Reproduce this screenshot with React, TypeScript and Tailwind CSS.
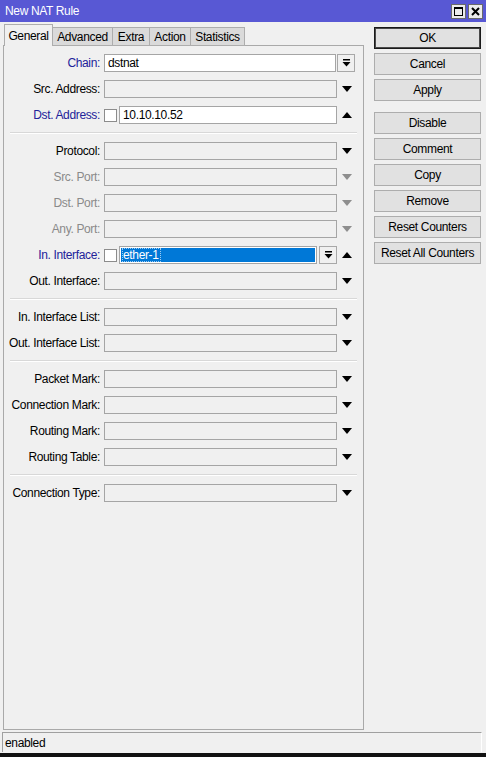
import React from "react";

type Kind = "plain" | "combo" | "check" | "checkSel";
type Row = { label: string; tone: "blue" | "black" | "gray"; kind: Kind; arrow?: "down" | "up" | "downGray" | "none"; value?: string };

const sections: Row[][] = [
  [
    { label: "Chain:", tone: "blue", kind: "combo", arrow: "none", value: "dstnat" },
    { label: "Src. Address:", tone: "black", kind: "plain", arrow: "down" },
    { label: "Dst. Address:", tone: "blue", kind: "check", arrow: "up", value: "10.10.10.52" },
  ],
  [
    { label: "Protocol:", tone: "black", kind: "plain", arrow: "down" },
    { label: "Src. Port:", tone: "gray", kind: "plain", arrow: "downGray" },
    { label: "Dst. Port:", tone: "gray", kind: "plain", arrow: "downGray" },
    { label: "Any. Port:", tone: "gray", kind: "plain", arrow: "downGray" },
    { label: "In. Interface:", tone: "blue", kind: "checkSel", arrow: "up", value: "ether-1" },
    { label: "Out. Interface:", tone: "black", kind: "plain", arrow: "down" },
  ],
  [
    { label: "In. Interface List:", tone: "black", kind: "plain", arrow: "down" },
    { label: "Out. Interface List:", tone: "black", kind: "plain", arrow: "down" },
  ],
  [
    { label: "Packet Mark:", tone: "black", kind: "plain", arrow: "down" },
    { label: "Connection Mark:", tone: "black", kind: "plain", arrow: "down" },
    { label: "Routing Mark:", tone: "black", kind: "plain", arrow: "down" },
    { label: "Routing Table:", tone: "black", kind: "plain", arrow: "down" },
  ],
  [{ label: "Connection Type:", tone: "black", kind: "plain", arrow: "down" }],
];

const DropAllIcon = () => (
  <svg width="9" height="8" viewBox="0 0 9 8">
    <rect x="1" y="0" width="7" height="1.5" fill="#000" />
    <path d="M0.5 3 L8.5 3 L4.5 7.5 Z" fill="#000" />
  </svg>
);

const Arrow = ({ dir, color }: { dir: "down" | "up"; color: string }) => (
  <svg width="10" height="6" viewBox="0 0 10 6">
    {dir === "down" ? <path d="M0 0 L10 0 L5 6 Z" fill={color} /> : <path d="M0 6 L10 6 L5 0 Z" fill={color} />}
  </svg>
);

const DropButton = () => (
  <div className="w-[18px] h-[18px] border border-[#a8a8a8] bg-[#f0f0f0] flex items-center justify-center shrink-0">
    <DropAllIcon />
  </div>
);

const Checkbox = () => <div className="w-[13px] h-[13px] border border-[#8c8c8c] bg-white shrink-0" />;

function Field({ row }: { row: Row }) {
  const toneCls = row.tone === "blue" ? "text-[#22229a]" : row.tone === "gray" ? "text-[#8a8a8a]" : "text-black";
  return (
    <div className="flex items-center h-[18px]">
      <div className={`w-[96px] text-right whitespace-nowrap ${toneCls}`}>{row.label}</div>
      <div className="w-[4px] shrink-0" />
      {row.kind === "plain" && <div className="w-[233px] h-[18px] border border-[#a5a5a5] bg-[#f0f0f0] shrink-0" />}
      {row.kind === "combo" && (
        <>
          <div className="w-[232px] h-[18px] border border-[#a5a5a5] bg-white shrink-0 flex items-center px-[3px] text-black">{row.value}</div>
          <div className="w-[1px] shrink-0" />
          <DropButton />
        </>
      )}
      {row.kind === "check" && (
        <>
          <Checkbox />
          <div className="w-[2px] shrink-0" />
          <div className="w-[218px] h-[18px] border border-[#a5a5a5] bg-white shrink-0 flex items-center px-[3px] text-black">{row.value}</div>
        </>
      )}
      {row.kind === "checkSel" && (
        <>
          <Checkbox />
          <div className="w-[2px] shrink-0" />
          <div className="w-[198px] h-[18px] border border-[#a5a5a5] bg-white shrink-0 p-[1px]">
            <div className="w-full h-full bg-[#0078d7] flex items-center pl-[1px] text-white">
              <span className="border border-dotted border-[#9ecbf0] leading-[12px] pr-[1px]">{row.value}</span>
            </div>
          </div>
          <div className="w-[2px] shrink-0" />
          <DropButton />
        </>
      )}
      {row.arrow && row.arrow !== "none" && (
        <div className="w-[19px] flex items-center justify-center shrink-0">
          {row.arrow === "up" ? <Arrow dir="up" color="#000" /> : <Arrow dir="down" color={row.arrow === "downGray" ? "#8e8e8e" : "#000"} />}
        </div>
      )}
    </div>
  );
}

const Btn = ({ label, def, className = "" }: { label: string; def?: boolean; className?: string }) => (
  <div
    className={`h-[22px] flex items-center justify-center bg-[#e1e1e1] text-black ${
      def ? "border border-[#1a1a1a] shadow-[inset_0_0_0_1px_#4a4a4a]" : "border border-[#adadad]"
    } ${className}`}
  >
    {label}
  </div>
);

export default function App() {
  const tabs = ["General", "Advanced", "Extra", "Action", "Statistics"];
  const tabW = [49, 60, 37, 41, 54];
  return (
    <div
      className="w-[486px] h-[757px] bg-[#f0f0f0] flex flex-col overflow-hidden text-[12px] tracking-[-0.35px]"
      style={{ fontFamily: '"Liberation Sans", Arial, sans-serif' }}
    >
      {/* Title bar */}
      <div className="h-[22px] bg-[#5858d4] flex items-center justify-between pl-[5px] pr-[3px] shrink-0">
        <span className="text-white text-[12px]">New NAT Rule</span>
        <div className="flex gap-[2px]">
          <div className="w-[15px] h-[15px] bg-[#ececec] border border-[#6a6a6a] flex items-center justify-center">
            <div className="w-[9px] h-[9px] border border-black border-t-2" />
          </div>
          <div className="w-[15px] h-[15px] bg-[#ececec] border border-[#6a6a6a] flex items-center justify-center">
            <svg width="9" height="9" viewBox="0 0 9 9">
              <path d="M1 1 L8 8 M8 1 L1 8" stroke="#000" strokeWidth="2" />
            </svg>
          </div>
        </div>
      </div>

      <div className="flex flex-1 min-h-0">
        {/* Left: tabs + frame */}
        <div className="ml-[3px] w-[361px] flex flex-col pt-[2px]">
          <div className="flex items-end h-[22px] pl-[1px] relative z-10 -mb-px">
            {tabs.map((t, i) =>
              i === 0 ? (
                <div
                  key={t}
                  className="h-[22px] bg-[#f0f0f0] border border-b-0 border-[#adadad] flex items-center justify-center text-black"
                  style={{ width: tabW[i] }}
                >
                  {t}
                </div>
              ) : (
                <div
                  key={t}
                  className="h-[19px] bg-[#dadada] border border-l-0 border-[#adadad] flex items-center justify-center text-black"
                  style={{ width: tabW[i] }}
                >
                  {t}
                </div>
              )
            )}
          </div>
          <div className="flex-1 border border-[#a9a9a9] bg-[#f0f0f0] pt-[8px]">
            <div className="flex flex-col">
              {sections.map((sec, si) => (
                <React.Fragment key={si}>
                  {si > 0 && (
                    <div className="my-[8px] ml-[6px] mr-[6px] h-[2px] border-t border-[#d8d8d8] border-b border-b-white" />
                  )}
                  <div className="flex flex-col gap-[8px]">
                    {sec.map((r) => (
                      <Field key={r.label} row={r} />
                    ))}
                  </div>
                </React.Fragment>
              ))}
            </div>
          </div>
        </div>

        {/* Right: buttons */}
        <div className="ml-[10px] w-[107px] flex flex-col gap-[4px] pt-[5px]">
          <Btn label="OK" def />
          <Btn label="Cancel" />
          <Btn label="Apply" />
          <Btn label="Disable" className="mt-[7px]" />
          <Btn label="Comment" />
          <Btn label="Copy" />
          <Btn label="Remove" />
          <Btn label="Reset Counters" />
          <Btn label="Reset All Counters" />
        </div>
      </div>

      {/* Status bar */}
      <div className="mt-[2px] mx-[2px] mr-[4px] h-[20px] border-t border-l border-[#a0a0a0] border-r border-r-white flex items-center pl-[2px] text-black shrink-0">
        enabled
      </div>
      <div className="h-[4px] bg-[#111] shrink-0 mt-[1px]" />
    </div>
  );
}
